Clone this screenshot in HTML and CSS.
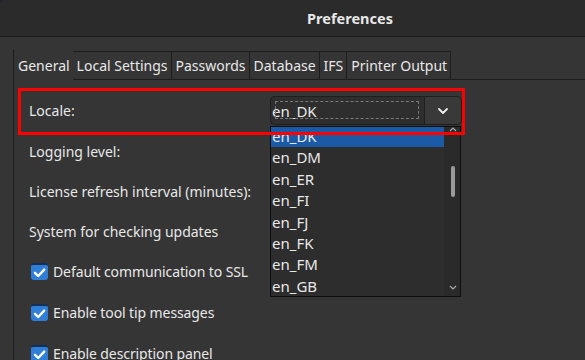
FILE: index.html
```html
<!DOCTYPE html>
<html lang="en">
<head>
    <meta charset="UTF-8">
    <title>Preferences</title>
    <link rel="stylesheet" href="styles.css">
</head>
<body>
    <div class="window">
        <header class="titlebar">Preferences</header>
        <div class="notebook">
            <div class="tabs">
                <div class="tab active">General</div>
                <div class="tab">Local Settings</div>
                <div class="tab">Passwords</div>
                <div class="tab">Database</div>
                <div class="tab">IFS</div>
                <div class="tab">Printer Output</div>
                <div class="tab-fill"></div>
            </div>
            <div class="page">
                <div class="locale-row">
                    <span class="label">Locale:</span>
                    <div class="combo">
                        <div class="combo-entry"><span class="focus-ring"></span>en_DK</div>
                        <div class="combo-button">
                            <svg width="12" height="8" viewBox="0 0 12 8"><path d="M2 2 L6 6 L10 2" fill="none" stroke="#eeeeee" stroke-width="1.8" stroke-linecap="round" stroke-linejoin="round"/></svg>
                        </div>
                        <div class="dropdown">
                            <ul class="options">
                                <li class="selected">en_DK</li>
                                <li>en_DM</li>
                                <li>en_ER</li>
                                <li>en_FI</li>
                                <li>en_FJ</li>
                                <li>en_FK</li>
                                <li>en_FM</li>
                                <li>en_GB</li>
                            </ul>
                            <div class="scroll">
                                <svg class="arrow-up" width="8" height="6" viewBox="0 0 8 6"><path d="M1 5 L4 2 L7 5" fill="none" stroke="#aaaaaa" stroke-width="1.2"/></svg>
                                <span class="thumb"></span>
                                <svg class="arrow-down" width="8" height="6" viewBox="0 0 8 6"><path d="M1 1 L4 4 L7 1" fill="none" stroke="#aaaaaa" stroke-width="1.2"/></svg>
                            </div>
                        </div>
                    </div>
                </div>
                <div class="row">Logging level:</div>
                <div class="row">License refresh interval (minutes):</div>
                <div class="row">System for checking updates</div>
                <div class="check-row">
                    <span class="check"><svg width="17" height="17" viewBox="0 0 17 17"><path d="M4 8.8 L7.2 12 L13.2 5.6" fill="none" stroke="#ffffff" stroke-width="2.4" stroke-linecap="round" stroke-linejoin="round"/></svg></span>
                    Default communication to SSL
                </div>
                <div class="check-row">
                    <span class="check"><svg width="17" height="17" viewBox="0 0 17 17"><path d="M4 8.8 L7.2 12 L13.2 5.6" fill="none" stroke="#ffffff" stroke-width="2.4" stroke-linecap="round" stroke-linejoin="round"/></svg></span>
                    Enable tool tip messages
                </div>
                <div class="check-row">
                    <span class="check"><svg width="17" height="17" viewBox="0 0 17 17"><path d="M4 8.8 L7.2 12 L13.2 5.6" fill="none" stroke="#ffffff" stroke-width="2.4" stroke-linecap="round" stroke-linejoin="round"/></svg></span>
                    Enable description panel
                </div>
            </div>
        </div>
        <div class="highlight"></div>
    </div>
</body>
</html>
```

FILE: styles.css
```css
:root {
    --bg-color: #353535;
    --title-bg: #2b2b2b;
    --text-color: #e8e8e8;
    --border-dark: #1e1e1e;
    --select-color: #1b5aa6;
    --check-color: #2f7fd8;
}

* {
    margin: 0;
    padding: 0;
    box-sizing: border-box;
}

body {
    width: 585px;
    height: 360px;
    overflow: hidden;
    background: #1d2430;
    font-family: 'Noto Sans', 'DejaVu Sans', sans-serif;
    font-size: 14px;
    color: var(--text-color);
}

.window {
    position: relative;
    width: 585px;
    height: 360px;
    background: var(--bg-color);
    border-top-left-radius: 6px;
    overflow: hidden;
}

.titlebar {
    height: 37px;
    padding-left: 115px;
    background: var(--title-bg);
    border-bottom: 1px solid #1a1a1a;
    text-align: center;
    line-height: 36px;
    font-weight: 700;
    font-size: 14.5px;
}

.notebook {
    margin: 12px 0 0 13px;
    border-left: 1px solid var(--border-dark);
    height: 320px;
}

.tabs {
    display: flex;
    align-items: flex-end;
    height: 31px;
}

.tab {
    height: 29px;
    padding: 0 3px 0 4px;
    line-height: 27px;
    border: 1px solid var(--border-dark);
    border-left: none;
    white-space: nowrap;
}

.tab.active {
    height: 31px;
    line-height: 33px;
    border: none;
}

.tab-fill {
    flex: 1;
    border-bottom: 1px solid var(--border-dark);
}

.page {
    padding: 8px 0 0 4px;
}

.locale-row {
    display: flex;
    width: 447px;
    height: 47px;
    padding: 8px 0 0 11px;
}

.label {
    width: 241px;
    line-height: 29px;
}

.combo {
    position: relative;
    display: flex;
    height: 29px;
}

.combo-entry {
    position: relative;
    width: 154px;
    padding-left: 1px;
    line-height: 29px;
    font-size: 15px;
    background: #2e2e2e;
    border: 1px solid var(--border-dark);
    border-right: none;
    border-radius: 5px 0 0 5px;
}

.focus-ring {
    position: absolute;
    left: 4px;
    top: 4px;
    width: 144px;
    height: 18px;
    border: 1px dashed #7a7a7a;
}

.combo-button {
    width: 38px;
    display: flex;
    align-items: center;
    justify-content: center;
    background: #393939;
    border: 1px solid var(--border-dark);
    border-radius: 0 5px 5px 0;
}

.dropdown {
    position: absolute;
    top: 30px;
    left: 0;
    width: 191px;
    height: 171px;
    display: flex;
    background: #2d2d2d;
    border: 1px solid #0e0e0e;
    overflow: hidden;
}

.options {
    list-style: none;
    width: 173px;
    margin-top: -1px;
}

.options li {
    height: 21.4px;
    line-height: 21.4px;
    padding-left: 1px;
    font-size: 15px;
}

.options li.selected {
    background: var(--select-color);
}

.scroll {
    position: relative;
    flex: 1;
    background: #2a2a2a;
}

.arrow-up {
    position: absolute;
    left: 5px;
    top: -1px;
}

.thumb {
    position: absolute;
    left: 7px;
    top: 39px;
    width: 4px;
    height: 31px;
    border-radius: 2px;
    background: #9a9a9a;
}

.arrow-down {
    position: absolute;
    left: 5px;
    bottom: 5px;
}

.row {
    height: 40px;
    padding: 7px 0 0 11px;
    line-height: 20px;
}

.check-row {
    display: flex;
    align-items: flex-start;
    gap: 5px;
    height: 41px;
    padding: 7px 0 0 13px;
    line-height: 20px;
    letter-spacing: -0.1px;
}

.check {
    width: 17px;
    height: 17px;
    margin-top: 1px;
    border-radius: 3px;
    background: var(--check-color);
    border-top: 2px solid #12305a;
    display: flex;
    align-items: center;
    justify-content: center;
}

.check svg {
    display: block;
}

.highlight {
    position: absolute;
    left: 18px;
    top: 88px;
    width: 447px;
    height: 47px;
    border: 3px solid #ff0000;
}
```
